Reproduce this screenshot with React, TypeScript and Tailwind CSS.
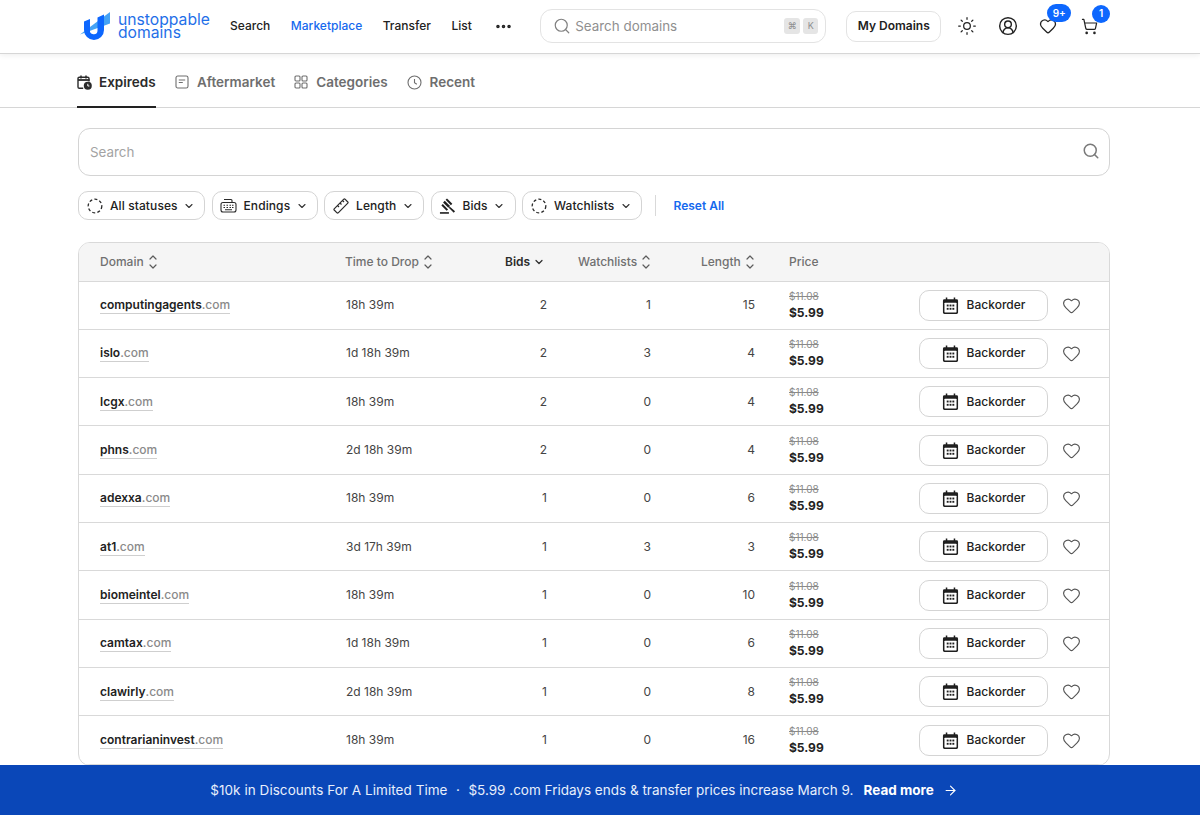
import React from "react";
import { Search, ChevronDown, Sun, CircleUserRound, Heart, ShoppingCart, Ellipsis, ArrowRight } from "lucide-react";

const rows = [
  ["computingagents", "18h 39m", 2, 1, 15],
  ["islo", "1d 18h 39m", 2, 3, 4],
  ["lcgx", "18h 39m", 2, 0, 4],
  ["phns", "2d 18h 39m", 2, 0, 4],
  ["adexxa", "18h 39m", 1, 0, 6],
  ["at1", "3d 17h 39m", 1, 3, 3],
  ["biomeintel", "18h 39m", 1, 0, 10],
  ["camtax", "1d 18h 39m", 1, 0, 6],
  ["clawirly", "2d 18h 39m", 1, 0, 8],
  ["contrarianinvest", "18h 39m", 1, 0, 16],
] as const;

function Logo() {
  return (
    <svg width="32" height="30" viewBox="0 0 32 30" className="shrink-0">
      <path d="M31 1v11.500L1 23.500z" fill="#45a3f5" />
      <path d="M25 3.500v15.500a10 10 0 0 1-20 0V10.500l6-2.500v11a3.700 3.700 0 0 0 7.500 1V6.500z" fill="#0d67fe" />
    </svg>
  );
}

function Calendar({ size = 17 }: { size?: number }) {
  return (
    <svg width={size} height={size} viewBox="0 0 18 18" fill="#1f1f1f">
      <path d="M4 0.500h1.600v2H12.400v-2H14v2h1.500A1.500 1.500 0 0 1 17 4v12.500a1.500 1.500 0 0 1-1.500 1.500h-13A1.500 1.500 0 0 1 1 16.500V4a1.500 1.500 0 0 1 1.500-1.500H4z" />
      <rect x="2.600" y="6" width="12.800" height="10.400" fill="#fff" rx="0.500" />
      <rect x="5" y="8" width="2" height="2" />
      <rect x="8" y="8" width="2" height="2" />
      <rect x="11" y="8" width="2" height="2" />
      <rect x="5" y="11.500" width="2" height="2" />
      <rect x="8" y="11.500" width="2" height="2" />
      <rect x="11" y="11.500" width="2" height="2" />
    </svg>
  );
}

function Dashed() {
  return (
    <svg width="16" height="16" viewBox="0 0 16 16" fill="none" stroke="#2a2a2a" strokeWidth="1.300" strokeDasharray="3 2.200">
      <circle cx="8" cy="8" r="6.800" />
    </svg>
  );
}

function Keyboard() {
  return (
    <svg width="17" height="17" viewBox="0 0 17 17" fill="none" stroke="#2a2a2a" strokeWidth="1.100">
      <rect x="1" y="5.500" width="15" height="9.500" rx="2" />
      <path d="M3.500 8.200h1.500M6.500 8.200h1.500M9.500 8.200h1.500M12 8.200h1.500M3.500 10.500h1.500M6.500 10.500h1.500M9.500 10.500h1.500M12 10.500h1.500M5 12.800h7M12 5.500V3.500q0-1-1-1H4" />
    </svg>
  );
}

function RulerIcon() {
  return (
    <svg width="16" height="16" viewBox="0 0 16 16" fill="none" stroke="#2a2a2a" strokeWidth="1.200" strokeLinejoin="round">
      <path d="M1.200 10.800 10.800 1.200q.6-.5 1.200 0L14.800 4q.5.6 0 1.200L5.200 14.800q-.6.5-1.200 0L1.200 12q-.5-.6 0-1.200z" />
      <path d="M4.500 7.500l1.500 1.500M7 5l1.500 1.500M9.500 2.500 11 4" />
    </svg>
  );
}

function GavelIcon() {
  return (
    <svg width="18" height="18" viewBox="0 0 18 18" fill="#1f1f1f">
      <rect x="1" y="15.500" width="9.500" height="1.700" />
      <path d="M4.300 5.200 6.100 3.400l5.600 5.600-1.800 1.800z" />
      <path d="M7 2.500 8.500 1l5.600 5.600-1.500 1.500z" />
      <path d="M2.500 8.500 4 7l5.600 5.600-1.500 1.500z" />
      <path d="M11.500 9.700 17 14.500l-1.400 1.600-5.300-5.200z" />
    </svg>
  );
}

function ExpiredIcon() {
  return (
    <svg width="15" height="15" viewBox="0 0 15 15" fill="none">
      <path d="M6.200 13.300H2.300a1.300 1.300 0 0 1-1.300-1.300V3.500a1.300 1.300 0 0 1 1.300-1.300h8.400a1.300 1.300 0 0 1 1.300 1.300v3" stroke="#2b2b2b" strokeWidth="1.400" />
      <path d="M1 5h11.500" stroke="#2b2b2b" strokeWidth="1.800" />
      <path d="M4 .5v3M9 .5v3" stroke="#2b2b2b" strokeWidth="1.500" />
      <circle cx="10.800" cy="10.800" r="4" fill="#2b2b2b" />
      <path d="M10.800 8.800v2.200h1.600" stroke="#fff" strokeWidth="1" />
    </svg>
  );
}

function AftermarketIcon() {
  return (
    <svg width="14" height="14" viewBox="0 0 14 14" fill="none" stroke="#6e6e6e" strokeWidth="1.100">
      <rect x="1" y="1" width="12" height="12" rx="1.800" />
      <path d="M3.800 5h6.400M3.800 7.500h4" />
    </svg>
  );
}

function CategoriesIcon() {
  return (
    <svg width="14" height="14" viewBox="0 0 14 14" fill="none" stroke="#6e6e6e" strokeWidth="1.100">
      <rect x="1" y="1" width="5" height="5" rx="1" />
      <rect x="8" y="1" width="5" height="5" rx="1" />
      <rect x="1" y="8" width="5" height="5" rx="1" />
      <rect x="8" y="8" width="5" height="5" rx="1" />
    </svg>
  );
}

function RecentIcon() {
  return (
    <svg width="15" height="15" viewBox="0 0 15 15" fill="none" stroke="#6e6e6e" strokeWidth="1.100">
      <circle cx="7.500" cy="7.500" r="6.500" />
      <path d="M7.500 4v3.800l2.300 1.400" />
    </svg>
  );
}

function SortIcon() {
  return (
    <svg width="8" height="14" viewBox="0 0 8 14" fill="none" stroke="#5c5c5c" strokeWidth="1.200" strokeLinecap="round" strokeLinejoin="round">
      <path d="M1 4 4 1 7 4M1 10l3 3 3-3" />
    </svg>
  );
}

function FilterChip({ icon, label, w }: { icon: React.ReactNode; label: string; w: string }) {
  return (
    <div className={`flex h-[29px] ${w} shrink-0 items-center gap-[7px] rounded-[10px] border border-[#d4d4d4] pl-[7px] text-[12px] font-medium tracking-[0.1px] text-[#222]`}>
      <span className="flex w-[17px] justify-center">{icon}</span>
      <span>{label}</span>
      <ChevronDown size={12} strokeWidth={2.200} className="-ml-[1.500px] text-[#333]" />
    </div>
  );
}

function Sort({ label, className = "" }: { label: string; className?: string }) {
  return (
    <div className={`flex items-center gap-[5px] ${className}`}>
      <span>{label}</span>
      <SortIcon />
    </div>
  );
}

function Row({ r }: { r: (typeof rows)[number] }) {
  return (
    <div className="flex h-[48.330px] items-center border-b border-[#d9d9d9] text-[12px] text-[#444]">
      <div className="w-[267px] pl-[21px]">
        <span className="border-b border-[#cfcfcf] pb-[1px] font-semibold text-[#222]">
          {r[0]}<span className="font-medium text-[#8a8a8a]">.com</span>
        </span>
      </div>
      <div className="w-[100px]">{r[1]}</div>
      <div className="w-[101px] text-right">{r[2]}</div>
      <div className="w-[104px] text-right">{r[3]}</div>
      <div className="w-[104px] text-right">{r[4]}</div>
      <div className="ml-[34px] flex w-[110px] flex-col">
        <span className="text-[10px] leading-[14px] text-[#8a8a8a] line-through">$11.08</span>
        <span className="mt-[1px] text-[12px] leading-[18px] font-bold text-[#222]">$5.99</span>
      </div>
      <div className="ml-[20px] flex h-[31px] w-[129px] items-center justify-center gap-[8px] rounded-[10px] border border-[#d4d4d4] font-medium text-[#222]">
        <Calendar />
        <span>Backorder</span>
      </div>
      <Heart size={19} strokeWidth={1.400} className="ml-[14px] text-[#555]" />
    </div>
  );
}

export default function App() {
  return (
    <div className="relative h-[815px] w-full overflow-hidden bg-white text-[12px] [font-family:Inter,'Liberation_Sans',sans-serif]">
      <header className="flex h-[54px] items-center border-b border-[#d6d6d6] pb-[1px] pl-[79px] shadow-[0_1px_6px_rgba(0,0,0,0.08)]">
        <div className="flex w-[151px] items-center gap-[7px]">
          <Logo />
          <div className="text-[15.700px] leading-[13px] text-[#1f6fe8]">
            <div>unstoppable</div>
            <div>domains</div>
          </div>
        </div>
        <nav className="flex items-center gap-[20.500px] font-medium text-[#222]">
          <span>Search</span>
          <span className="text-[#1569ee]">Marketplace</span>
          <span>Transfer</span>
          <span>List</span>
          <Ellipsis size={19} strokeWidth={2.500} className="ml-[2px]" />
        </nav>
        <div className="ml-[27px] flex h-[34px] w-[286px] items-center rounded-[12px] border border-[#e3e3e3] pl-[12px] pr-[7px]">
          <Search size={18} strokeWidth={1.600} className="text-[#808080]" />
          <span className="ml-[4px] flex-1 text-[13.400px] text-[#8f8f8f]">Search domains</span>
          <span className="mr-[2px] flex h-[16px] w-[16px] items-center justify-center rounded-[3px] bg-[#e5e5e5] text-[9px] text-[#8f8f8f]">⌘</span>
          <span className="ml-[1px] flex h-[16px] w-[15px] items-center justify-center rounded-[3px] bg-[#e5e5e5] text-[9px] text-[#8f8f8f]">K</span>
        </div>
        <div className="ml-[20px] flex h-[31px] w-[95px] items-center justify-center rounded-[10px] border border-[#e3e3e3] font-semibold text-[#222]">My Domains</div>
        <Sun size={20} strokeWidth={1.500} className="ml-[16px] text-[#222]" />
        <CircleUserRound size={20} strokeWidth={1.700} className="ml-[21px] text-[#222]" />
        <div className="relative ml-[21px]">
          <Heart size={18} strokeWidth={1.700} className="text-[#222]" />
          <span className="absolute left-[8px] top-[-13px] flex h-[18px] w-[24px] items-center justify-center rounded-full bg-[#0d67fe] text-[10px] font-semibold text-white">9+</span>
        </div>
        <div className="relative ml-[24px]">
          <ShoppingCart size={17} strokeWidth={1.700} className="text-[#222]" />
          <span className="absolute left-[11px] top-[-13px] flex h-[18px] w-[18px] items-center justify-center rounded-full bg-[#0d67fe] text-[10px] font-semibold text-white">1</span>
        </div>
      </header>

      <div className="flex h-[54px] items-stretch gap-[19px] border-b border-[#d6d6d6] pl-[77px] text-[13.500px] font-semibold text-[#6e6e6e]">
        <div className="mb-[-1px] flex w-[79px] items-center gap-[7px] border-b-2 border-[#222] pt-[5px] text-[#2b2b2b]">
          <ExpiredIcon />
          <span>Expireds</span>
        </div>
        <div className="flex items-center gap-[8px] pt-[3px]">
          <AftermarketIcon />
          <span>Aftermarket</span>
        </div>
        <div className="flex items-center gap-[8px] pt-[3px]">
          <CategoriesIcon />
          <span>Categories</span>
        </div>
        <div className="flex items-center gap-[8px] pt-[3px]">
          <RecentIcon />
          <span>Recent</span>
        </div>
      </div>

      <main className="pl-[78px] pr-[90px] pt-[20px]">
        <div className="flex h-[48px] items-center justify-between rounded-[12px] border border-[#d4d4d4] pl-[11px] pr-[9px]">
          <span className="text-[13.400px] text-[#a3a3a3]">Search</span>
          <Search size={18} strokeWidth={2} className="mb-[2px] text-[#7a7a7a]" />
        </div>

        <div className="mt-[15px] flex items-center gap-[6.500px]">
          <FilterChip icon={<Dashed />} label="All statuses" w="w-[127px]" />
          <FilterChip icon={<Keyboard />} label="Endings" w="w-[106px]" />
          <FilterChip icon={<RulerIcon />} label="Length" w="w-[100px]" />
          <FilterChip icon={<GavelIcon />} label="Bids" w="w-[85px]" />
          <FilterChip icon={<Dashed />} label="Watchlists" w="w-[119.500px]" />
          <div className="ml-[6.500px] h-[21px] w-px bg-[#d9d9d9]" />
          <span className="ml-[11.500px] font-semibold text-[#1569ee]">Reset All</span>
        </div>

        <div className="mt-[22px] overflow-hidden rounded-[12px] border border-[#d9d9d9]">
          <div className="flex h-[38.500px] items-center border-b border-[#d9d9d9] bg-[#f5f5f5] font-medium text-[#707070]">
            <Sort label="Domain" className="w-[266px] pl-[21px]" />
            <Sort label="Time to Drop" className="w-[160px]" />
            <div className="flex w-[47px] items-center gap-[3px] font-semibold text-[#2b2b2b]">
              <span>Bids</span>
              <ChevronDown size={12} strokeWidth={2.400} />
            </div>
            <Sort label="Watchlists" className="ml-[26px] w-[100px]" />
            <Sort label="Length" className="w-[100px] pl-[23px]" />
            <span className="ml-[11px]">Price</span>
          </div>
          {rows.map((r) => (
            <Row key={r[0]} r={r} />
          ))}
        </div>
      </main>

      <div className="fixed inset-x-0 bottom-0 flex h-[50px] items-center justify-center bg-[#0a47b8] pr-[32px] text-[13.500px] text-[#e8effc]">
        <span className="tracking-[0.05px]">$10k in Discounts For A Limited Time</span>
        <span className="mx-[8.500px]">·</span>
        <span>$5.99 .com Fridays ends &amp; transfer prices increase March 9.</span>
        <span className="ml-[10px] font-bold text-white">Read more</span>
        <ArrowRight size={15} strokeWidth={1.800} className="ml-[9px] text-white" />
      </div>
    </div>
  );
}
